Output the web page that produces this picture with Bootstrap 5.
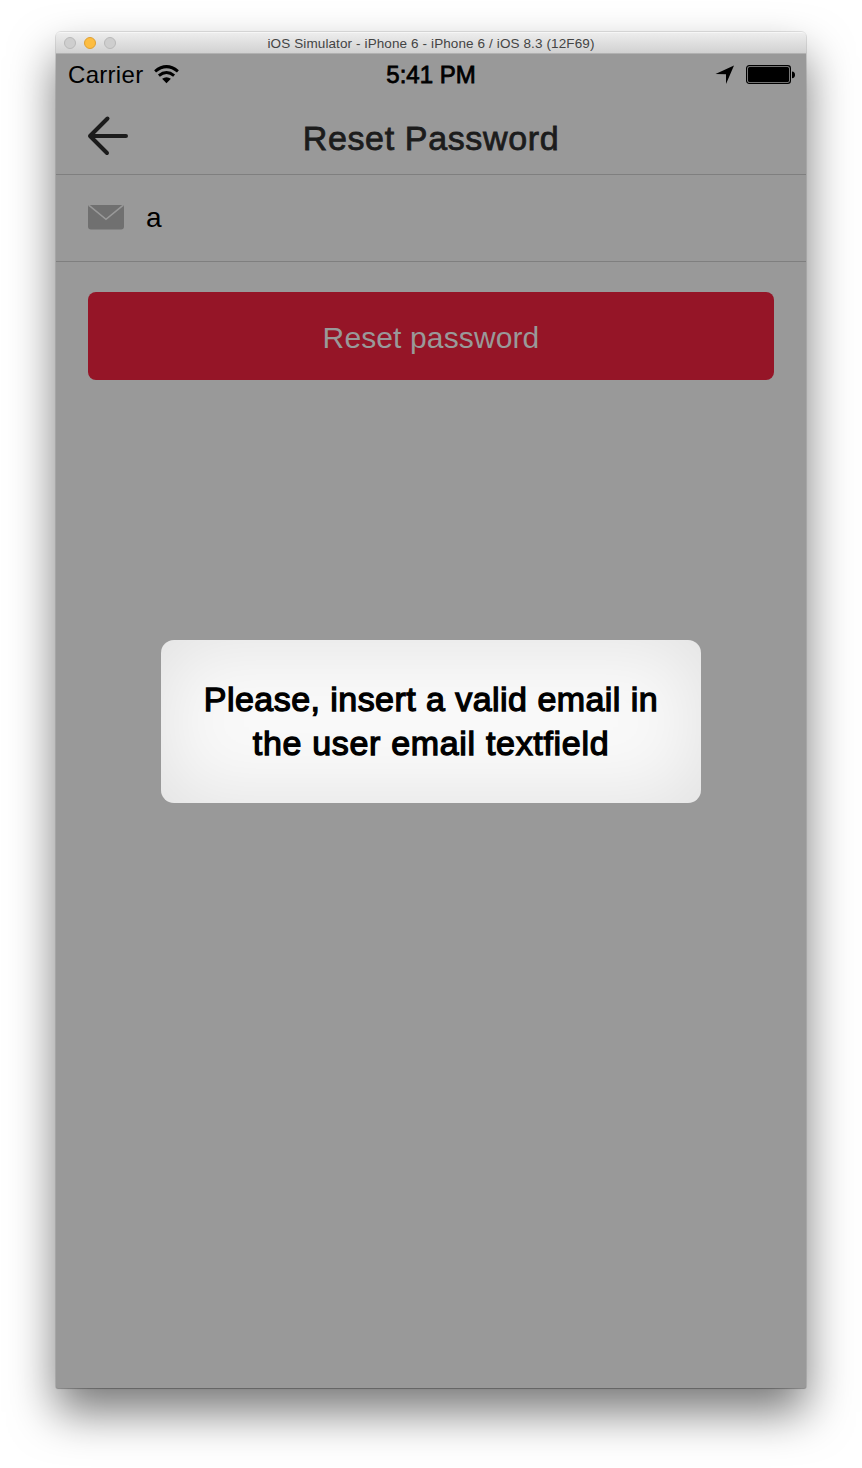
<!DOCTYPE html>
<html lang="en">
<head>
<meta charset="utf-8">
<meta name="viewport" content="width=device-width, initial-scale=1">
<title>iOS Simulator</title>
<link href="https://cdn.jsdelivr.net/npm/bootstrap@5.3.0/dist/css/bootstrap.min.css" rel="stylesheet">
<style>
  body { font-family: "Liberation Sans", Arial, sans-serif; background: #fff; color: #000; height: 1468px; overflow: hidden; padding-top: 32px; }
  .sim-window { width: 750px; height: 1356px; border-radius: 5px 5px 2px 2px; background: #999;
    box-shadow: 0 0 0 1px rgba(0,0,0,.1), 0 1px 1px rgba(0,0,0,.2), 0 24px 46px rgba(0,0,0,.53); }
  .title-bar { height: 22px; border-radius: 4px 4px 0 0; background: linear-gradient(#ededed, #d1d1d1); border-bottom: 1px solid #b1b1b1; border-top: 1px solid #f6f6f6; }
  .dots { left: 8px; top: 4px; gap: 8px; }
  .dot { width: 12px; height: 12px; border-radius: 50%; background: #cecece; border: 1px solid #b9b9b9; }
  .dot.amber { background: #fdbd41; border-color: #dfa033; }
  .window-title { font-size: 13.5px; line-height: 21px; letter-spacing: .11px; color: #444; }
  .status-bar { height: 41px; font-size: 24px; line-height: 41px; padding: 0 11px 0 12px; }
  .status-bar .carrier { letter-spacing: .3px; }
  .medium { -webkit-text-stroke: .8px currentColor; }
  .nav-head { height: 80px; border-bottom: 1px solid #7f7f7f; color: #1c1c1c; }
  .nav-head h1 { font-size: 34px; font-weight: 400; line-height: 86px; letter-spacing: .64px; }
  .field-row { height: 87px; border-bottom: 1px solid #7f7f7f; padding: 0 32px; gap: 22px; font-size: 28px; }
  .reset-btn { height: 88px; margin: 30px 32px 0; border-radius: 8px; background: #951527; color: #999; font-size: 30px; letter-spacing: .12px; padding: 2px 0 0; border: 0; width: 686px; }
  .reset-btn:hover { background: #951527; color: #999; }
  .toast-box { left: 105px; top: 608px; width: 540px; height: 163px; border-radius: 13px; font-size: 34px; line-height: 44px; padding-bottom: 2px;
    background: #f9f9f9; box-shadow: inset 0 0 80px rgba(0,0,0,.1); -webkit-text-stroke: 1.3px #000; }
  .line-one { letter-spacing: .45px; }
  .line-two { letter-spacing: .68px; }
</style>
</head>
<body>
<main class="sim-window mx-auto position-relative">
  <header class="title-bar position-relative text-center">
    <div class="dots position-absolute d-flex"><i class="dot"></i><i class="dot amber"></i><i class="dot"></i></div>
    <div class="window-title">iOS Simulator - iPhone 6 - iPhone 6 / iOS 8.3 (12F69)</div>
  </header>
  <div class="status-bar d-flex align-items-center position-relative">
    <span class="carrier">Carrier</span>
    <svg class="ms-2" width="30" height="22" viewBox="-.5 .5 30 22" fill="none" stroke="#000" stroke-width="3">
      <path d="M3.6 7.8Q15 -1.5 26.4 7.8"/><path d="M7.4 12.1Q15 5.9 22.6 12.1"/>
      <path d="M10.6 15.2Q15 12.2 19.4 15.2L15 19.8Z" fill="#000" stroke="none"/>
    </svg>
    <span class="medium position-absolute start-0 w-100 text-center">5:41 PM</span>
    <svg class="ms-auto me-2" width="24" height="20" viewBox="-1 0 24 20"><path d="M1.5 9.1 20 .6 12 19V9.3Z"/></svg>
    <svg width="50" height="20" viewBox="0 0 50 20"><rect x="1.6" y=".6" width="43.8" height="17.8" rx="2.6" fill="none" stroke="#000" stroke-width="1.2"/><rect x="3" y="2" width="41" height="15" rx="1.5"/><path d="M47 6.4Q50 6.5 50 9.8T47 13.2Z"/></svg>
  </div>
  <div class="nav-head position-relative">
    <svg class="position-absolute" style="left:30px;top:18px" width="44" height="44" viewBox="0 0 44 44" fill="none" stroke="#1c1c1c" stroke-width="4" stroke-linecap="round" stroke-linejoin="round"><path d="M21.5 5.5 4 23 21 40M4 23H40"/></svg>
    <h1 class="medium text-center m-0">Reset Password</h1>
  </div>
  <div class="field-row d-flex align-items-center">
    <svg width="36" height="26" viewBox="0 1 36 26"><path fill="#707070" d="M2 1H34Q36 1 36 3V22.5Q36 25.5 33 25.5H3Q0 25.5 0 22.5V3Q0 1 2 1Z"/><path d="M1 1.3 18 15.3 35 1.3" fill="none" stroke="#999" stroke-width="1.5"/></svg>
    <span>a</span>
  </div>
  <button type="button" class="btn reset-btn d-block">Reset password</button>
  <div class="toast-box position-absolute d-flex flex-column justify-content-center text-center" role="alert">
    <span class="line-one">Please, insert a valid email in</span>
    <span class="line-two">the user email textfield</span>
  </div>
</main>
<script src="https://cdn.jsdelivr.net/npm/bootstrap@5.3.0/dist/js/bootstrap.bundle.min.js"></script>
</body>
</html>
